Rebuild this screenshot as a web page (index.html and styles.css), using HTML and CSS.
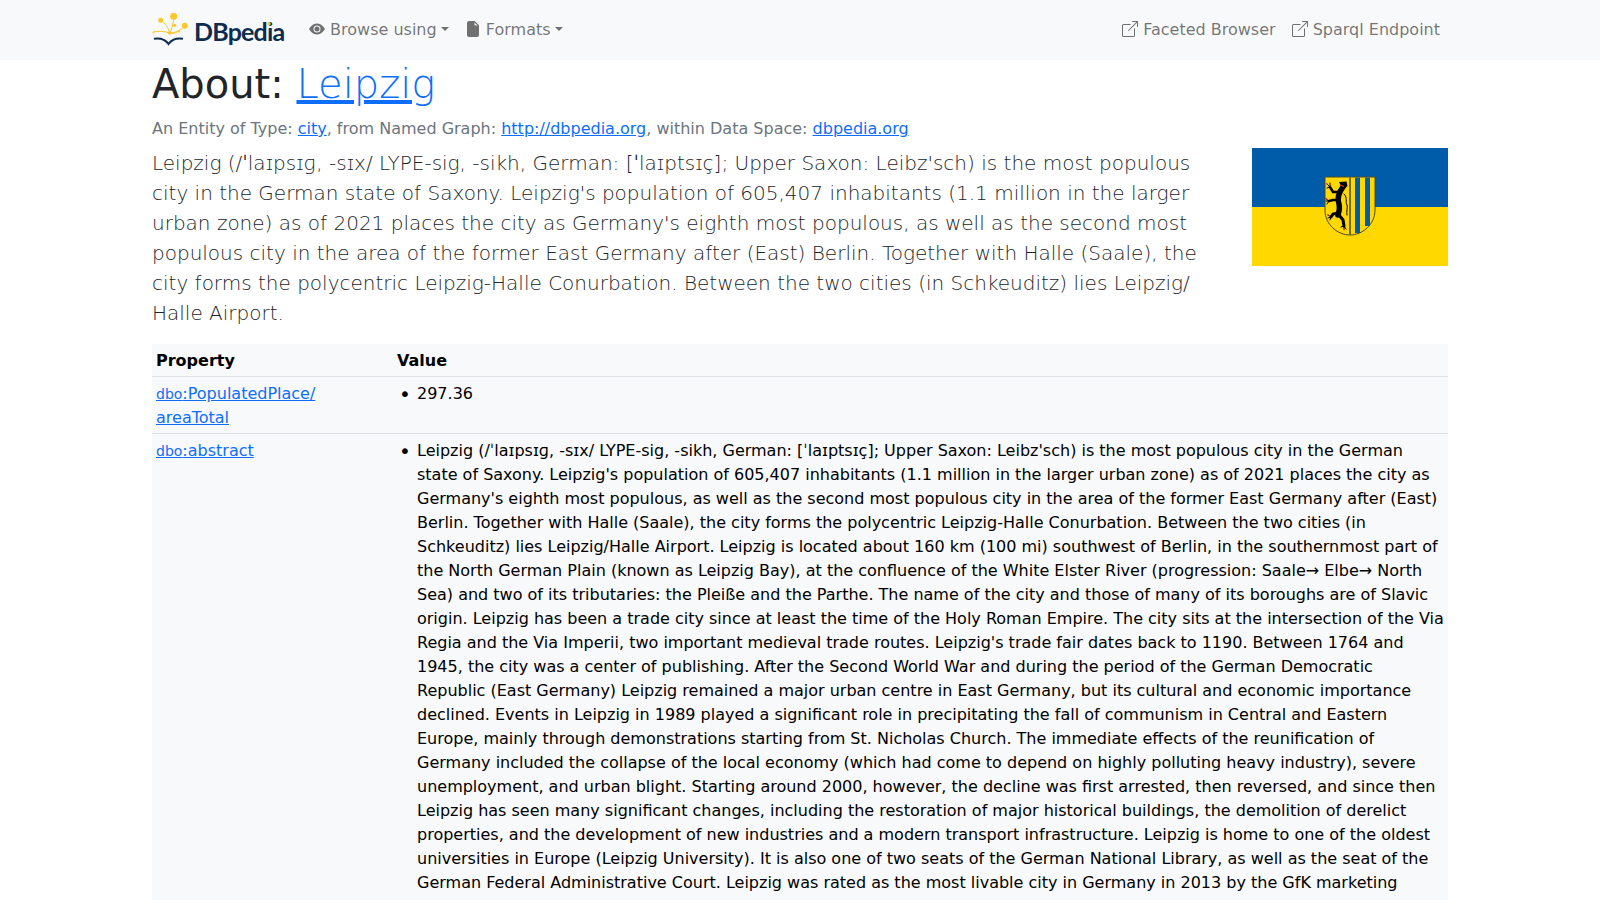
FILE: index.html
```html
<!DOCTYPE html>
<html lang="en">
<head>
    <meta charset="UTF-8">
    <meta name="viewport" content="width=device-width, initial-scale=1.0">
    <title>About: Leipzig</title>
    <link rel="stylesheet" href="styles.css">
</head>
<body>
    <nav class="navbar">
        <div class="container nav-inner">
            <a class="brand" href="#">
                <svg class="logo" width="134" height="36" viewBox="0 0 134 36">
                    <g stroke="#fcc72d" stroke-width="1" fill="none">
                        <path d="M18 21C20 16 22 10 21.700 4.300"/>
                        <path d="M18 21C16 15 13 11 8.700 8.300"/>
                        <path d="M18 21C24 21 29 18 32.700 13.700"/>
                        <path d="M18 21C12 19 6 19 1 20"/>
                        <path d="M18 21C21 22 24 21 26.700 19.300"/>
                    </g>
                    <g fill="#fcc72d">
                        <circle cx="21.700" cy="4.300" r="3.500"/>
                        <circle cx="8.700" cy="8.300" r="2.500"/>
                        <circle cx="32.700" cy="13.700" r="3"/>
                        <circle cx="22.700" cy="13.300" r="1.600"/>
                        <circle cx="17.700" cy="21" r="1.800"/>
                        <circle cx="1.500" cy="20.500" r="1"/>
                        <circle cx="26.700" cy="19.300" r="1.200"/>
                    </g>
                    <path d="M2 26.700C8 25.800 13 27 16.500 32C20 27 25 25.800 31 26.700" stroke="#0e2d4e" stroke-width="2" fill="none"/>
                    <text class="logo-text" x="42" y="29">DBpedia</text>
                    <circle cx="117" cy="11.700" r="1.700" fill="#fcc72d"/>
                </svg>
            </a>
            <ul class="nav-list">
                <li><a class="nav-link dropdown" href="#">
                    <svg class="icon" width="16" height="16" viewBox="0 0 16 16" fill="currentColor"><path d="M10.500 8a2.500 2.500 0 1 1-5 0 2.500 2.500 0 0 1 5 0z"/><path d="M0 8s3-5.500 8-5.500S16 8 16 8s-3 5.500-8 5.500S0 8 0 8zm8 3.500a3.500 3.500 0 1 0 0-7 3.500 3.500 0 0 0 0 7z"/></svg>
                    Browse using</a></li>
                <li><a class="nav-link dropdown" href="#">
                    <svg class="icon" width="16" height="16" viewBox="0 0 16 16" fill="currentColor"><path d="M4 0h5.300a1 1 0 0 1 .7.300L13.700 4a1 1 0 0 1 .3.700V14a2 2 0 0 1-2 2H4a2 2 0 0 1-2-2V2a2 2 0 0 1 2-2zm5.500 1.500v2a1 1 0 0 0 1 1h2l-3-3z"/></svg>
                    Formats</a></li>
            </ul>
            <ul class="nav-list nav-right">
                <li><a class="nav-link" href="#">
                    <svg class="icon" width="16" height="16" viewBox="0 0 16 16" fill="currentColor"><path fill-rule="evenodd" d="M8.636 3.500a.5.500 0 0 0-.5-.5H1.500A1.500 1.500 0 0 0 0 4.500v10A1.500 1.500 0 0 0 1.500 16h10a1.500 1.500 0 0 0 1.500-1.500V7.864a.5.500 0 0 0-1 0V14.500a.5.500 0 0 1-.5.500h-10a.5.500 0 0 1-.5-.5v-10a.5.500 0 0 1 .5-.5h6.636a.5.500 0 0 0 .5-.5z"/><path fill-rule="evenodd" d="M16 .5a.5.500 0 0 0-.5-.5h-5a.5.500 0 0 0 0 1h3.793L6.146 9.146a.5.500 0 1 0 .708.708L15 1.707V5.500a.5.500 0 0 0 1 0v-5z"/></svg>
                    Faceted Browser</a></li>
                <li><a class="nav-link" href="#">
                    <svg class="icon" width="16" height="16" viewBox="0 0 16 16" fill="currentColor"><path fill-rule="evenodd" d="M8.636 3.500a.5.500 0 0 0-.5-.5H1.500A1.500 1.500 0 0 0 0 4.500v10A1.500 1.500 0 0 0 1.500 16h10a1.500 1.500 0 0 0 1.500-1.500V7.864a.5.500 0 0 0-1 0V14.500a.5.500 0 0 1-.5.500h-10a.5.500 0 0 1-.5-.5v-10a.5.500 0 0 1 .5-.5h6.636a.5.500 0 0 0 .5-.5z"/><path fill-rule="evenodd" d="M16 .5a.5.500 0 0 0-.5-.5h-5a.5.500 0 0 0 0 1h3.793L6.146 9.146a.5.500 0 1 0 .708.708L15 1.707V5.500a.5.500 0 0 0 1 0v-5z"/></svg>
                    Sparql Endpoint</a></li>
            </ul>
        </div>
    </nav>

    <main class="container">
        <h1 class="page-title">About: <a href="#"><span class="title-name">Leipzig</span></a></h1>
        <div class="entity-meta">An Entity of Type: <a href="#">city</a>, from Named Graph: <a href="#">http://dbpedia.org</a>, within Data Space: <a href="#">dbpedia.org</a></div>

        <div class="summary">
            <p class="lead">Leipzig (/<span class="ipa">ˈ</span>laɪpsɪɡ, -sɪx/ LYPE-sig, -⁠sikh, German: [<span class="ipa">ˈ</span>laɪptsɪç]; Upper Saxon: Leibz'sch) is the most populous city in the German state of Saxony. Leipzig's population of 605,407 inhabitants (1.1 million in the larger urban zone) as of 2021 places the city as Germany's eighth most populous, as well as the second most populous city in the area of the former East Germany after (East) Berlin. Together with Halle (Saale), the city forms the polycentric Leipzig-Halle Conurbation. Between the two cities (in Schkeuditz) lies Leipzig/<wbr>Halle Airport.</p>
            <svg class="flag" width="196" height="118" viewBox="0 0 196 118">
                <rect width="196" height="59" fill="#005ca9"/>
                <rect y="59" width="196" height="59" fill="#ffd800"/>
                <path d="M73 29H123V62C123 77 110 87 98 87C86 87 73 77 73 62Z" fill="#ffd800" stroke="#4a4a30" stroke-width="1"/>
                <path d="M97 29.500H99V86.500H97Z" fill="#6d6a2a"/>
                <path d="M103 29.500H108V85H103ZM113 29.500H118V78H113Z" fill="#005ca9"/>
                <!-- lion -->
                <path d="M87 34L94.500 33.500L95.500 38L92 41L89 38Z" fill="#000"/>
                <g stroke="#000" fill="none" stroke-linecap="round">
                    <path d="M91 39C87 44 85 50 87 56C88 60 87 64 86 67" stroke-width="5.500"/>
                    <path d="M87 44L81 44L78 39" stroke-width="2.500"/>
                    <path d="M86 52L81 52L77 53" stroke-width="2.500"/>
                    <path d="M86 65L81 66L79 69" stroke-width="3"/>
                    <path d="M87 67L91 72L92 78" stroke-width="3"/>
                    <path d="M92 46C96 50 93 54 95 57C96 60 94 63 95 67" stroke-width="1"/>
                    <g stroke-width="1">
                        <path d="M78 39L75 36M78 39L78 35M78 39L75 40"/>
                        <path d="M77 53L74 51M77 53L74 53M77 53L75 56"/>
                        <path d="M79 69L76 67M79 69L76 70M79 69L78 72"/>
                        <path d="M92 78L89 79M92 78L92 81M92 78L94 81"/>
                    </g>
                </g>
                <path d="M88 37L92 38.500M74.500 35.500L75.500 36.500M74 50.500L75 51.500M75.500 66.500L76.500 67.500M91.500 81L92.500 82" stroke="#e0301e" stroke-width="1.200"/>
            </svg>
        </div>

        <table class="prop-table">
            <thead>
                <tr><th class="col-prop">Property</th><th>Value</th></tr>
            </thead>
            <tbody>
                <tr>
                    <td class="col-prop"><a href="#"><small>dbo</small>:PopulatedPlace/<wbr>areaTotal</a></td>
                    <td><ul class="values"><li>297.36</li></ul></td>
                </tr>
                <tr>
                    <td class="col-prop"><a href="#"><small>dbo</small>:abstract</a></td>
                    <td><ul class="values"><li>Leipzig (/ˈlaɪpsɪɡ, -sɪx/ LYPE-sig, -⁠sikh, German: [ˈlaɪptsɪç]; Upper Saxon: Leibz'sch) is the most populous city in the German state of Saxony. Leipzig's population of 605,407 inhabitants (1.1 million in the larger urban zone) as of 2021 places the city as Germany's eighth most populous, as well as the second most populous city in the area of the former East Germany after (East) Berlin. Together with Halle (Saale), the city forms the polycentric Leipzig-Halle Conurbation. Between the two cities (in Schkeuditz) lies Leipzig/Halle Airport. Leipzig is located about 160 km (100 mi) southwest of Berlin, in the southernmost part of the North German Plain (known as Leipzig Bay), at the confluence of the White Elster River (progression: Saale→ Elbe→ North Sea) and two of its tributaries: the Pleiße and the Parthe. The name of the city and those of many of its boroughs are of Slavic origin. Leipzig has been a trade city since at least the time of the Holy Roman Empire. The city sits at the intersection of the Via Regia and the Via Imperii, two important medieval trade routes. Leipzig's trade fair dates back to 1190. Between 1764 and 1945, the city was a center of publishing. After the Second World War and during the period of the German Democratic Republic (East Germany) Leipzig remained a major urban centre in East Germany, but its cultural and economic importance declined. Events in Leipzig in 1989 played a significant role in precipitating the fall of communism in Central and Eastern Europe, mainly through demonstrations starting from St. Nicholas Church. The immediate effects of the reunification of Germany included the collapse of the local economy (which had come to depend on highly polluting heavy industry), severe unemployment, and urban blight. Starting around 2000, however, the decline was first arrested, then reversed, and since then Leipzig has seen many significant changes, including the restoration of major historical buildings, the demolition of derelict properties, and the development of new industries and a modern transport infrastructure. Leipzig is home to one of the oldest universities in Europe (Leipzig University). It is also one of two seats of the German National Library, as well as the seat of the German Federal Administrative Court. Leipzig was rated as the most livable city in Germany in 2013 by the GfK marketing research institute.</li></ul></td>
                </tr>
            </tbody>
        </table>
    </main>
</body>
</html>
```

FILE: styles.css
```css
* {
    box-sizing: border-box;
}
body {
    margin: 0;
    background-color: #fff;
    color: #212529;
    font-family: "DejaVu Sans", sans-serif;
    font-size: 16px;
    line-height: 24px;
}
a {
    color: #0d6efd;
}
.container {
    width: 1320px;
    margin: 0 auto;
    padding: 0 12px;
}
.navbar {
    background-color: #f8f9fa;
    height: 60px;
}
.nav-inner {
    display: flex;
    align-items: center;
    height: 60px;
}
.brand {
    display: block;
    height: 36px;
    margin-right: 15px;
}
.logo {
    display: block;
}
.logo-text {
    font-family: Lato, sans-serif;
    font-size: 25px;
    font-weight: 700;
    letter-spacing: -0.8px;
    fill: #0e2d4e;
}
.nav-list {
    display: flex;
    list-style: none;
    margin: 0;
    padding: 0;
}
.nav-right {
    margin-left: auto;
}
.nav-link {
    display: block;
    padding: 8px;
    color: rgba(0, 0, 0, 0.55);
    text-decoration: none;
}
.icon {
    vertical-align: -2px;
}
.dropdown::after {
    content: "";
    display: inline-block;
    margin-left: 0.255em;
    vertical-align: 0.255em;
    border-top: 0.3em solid;
    border-left: 0.3em solid transparent;
    border-right: 0.3em solid transparent;
}
.page-title {
    margin: 0;
    font-size: 40px;
    font-weight: 500;
    line-height: 48px;
}
.title-name {
    font-weight: 200;
}
.entity-meta {
    margin-top: 9px;
    color: #6c757d;
}
.summary {
    display: flex;
    justify-content: space-between;
    align-items: flex-start;
    margin-top: 7px;
}
.lead {
    width: 1076px;
    margin: 0;
    color: #212529;
    font-size: 20px;
    font-weight: 300;
    line-height: 30px;
}
.ipa {
    font-weight: 400;
}
.flag {
    display: block;
}
.prop-table {
    width: 100%;
    margin-top: 16px;
    border-collapse: separate;
    border-spacing: 0;
    background-color: #f8f9fa;
    color: #000;
}
.prop-table th,
.prop-table td {
    padding: 5px 4px 3px;
    text-align: left;
    vertical-align: top;
    border-bottom: 1px solid #dee2e6;
}
.prop-table .col-prop {
    width: 241px;
    padding-right: 5px;
}
.prop-table small {
    font-size: 14px;
}
.values {
    margin: 0;
    padding-left: 20px;
    list-style: none;
}
.values li::before {
    content: "•";
    float: left;
    margin-left: -18px;
    font-size: 20px;
}
```
